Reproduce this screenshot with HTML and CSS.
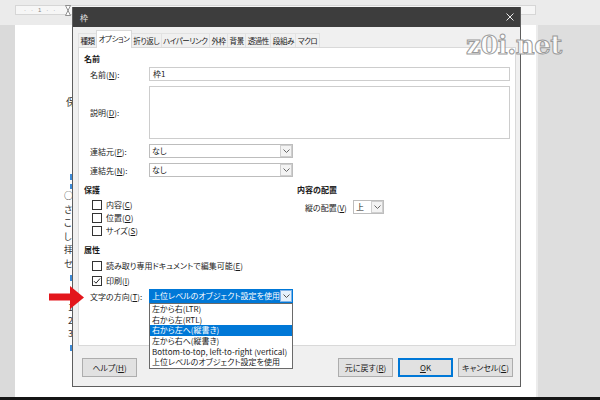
FILE: index.html
```html
<!DOCTYPE html>
<html lang="ja">
<head>
<meta charset="utf-8">
<title>枠</title>
<link rel="stylesheet" href="styles.css">
</head>
<body>
<div class="screen">
  <div class="topbar">
    <div class="ruler">
      <span class="ruler-marks">·&nbsp;&nbsp;&nbsp;·&nbsp;&nbsp;&nbsp;1&nbsp;&nbsp;&nbsp;·&nbsp;&nbsp;&nbsp;·</span>
      <svg class="hourglass" width="6" height="11" viewBox="0 0 6 11"><path d="M0.5 0.5H5.5L3 5.5L5.5 10.5H0.5L3 5.5Z" fill="#fff" stroke="#777" stroke-width="0.8"/></svg>
    </div>
  </div>
  <div class="workspace">
    <div class="gutter-left"></div>
    <div class="page">
      <div class="doc-line first">保</div>
      <span class="tick t1"></span>
      <span class="tick t2"></span>
      <div class="doc-block b1">
        <div>○</div><div>さ</div><div>こ</div><div>し</div><div>拝</div><div>セ</div>
      </div>
      <span class="tick t3"></span>
      <div class="doc-block b2">
        <div>1</div><div>2</div><div>3</div>
      </div>
      <span class="tick t4"></span>
    </div>
    <div class="gutter-right"></div>
  </div>
  <div class="bottom-edge"></div>

  <div class="dialog">
    <div class="titlebar">
      <span class="title">枠</span>
      <svg class="close" width="8" height="8" viewBox="0 0 8 8"><path d="M0.5 0.5L7.5 7.5M7.5 0.5L0.5 7.5" stroke="#e8e8e8" stroke-width="1"/></svg>
    </div>
    <div class="dlg-body">
      <div class="tabs">
        <div class="tab">種類</div>
        <div class="tab active">オプション</div>
        <div class="tab">折り返し</div>
        <div class="tab">ハイパーリンク</div>
        <div class="tab">外枠</div>
        <div class="tab">背景</div>
        <div class="tab">透過性</div>
        <div class="tab">段組み</div>
        <div class="tab">マクロ</div>
      </div>
      <div class="panel">
        <div class="heading">名前</div>
        <div class="form">
          <span class="lbl">名前(<u>N</u>):</span>
          <div class="input">枠1</div>
          <span class="lbl">説明(<u>D</u>):</span>
          <div class="textarea"></div>
          <span class="lbl">連結元(<u>P</u>):</span>
          <div class="select wide"><span class="val">なし</span><span class="dd"><svg width="7" height="4" viewBox="0 0 7 4"><path d="M0.5 0.5L3.5 3.5L6.5 0.5" fill="none" stroke="#666"/></svg></span></div>
          <span class="lbl">連結先(<u>N</u>):</span>
          <div class="select wide"><span class="val">なし</span><span class="dd"><svg width="7" height="4" viewBox="0 0 7 4"><path d="M0.5 0.5L3.5 3.5L6.5 0.5" fill="none" stroke="#666"/></svg></span></div>
        </div>
        <div class="cols">
          <div class="col-left">
            <div class="heading">保護</div>
            <div class="checks">
              <div class="check"><span class="box"></span>内容(<u>C</u>)</div>
              <div class="check"><span class="box"></span>位置(<u>O</u>)</div>
              <div class="check"><span class="box"></span>サイズ(<u>S</u>)</div>
            </div>
            <div class="heading attr">属性</div>
            <div class="checks checks2">
              <div class="check"><span class="box"></span>読み取り専用ドキュメントで編集可能(<u>E</u>)</div>
              <div class="check"><span class="box"><svg width="8" height="8" viewBox="0 0 8 8"><path d="M1 4.2L3 6.2L7 1.5" fill="none" stroke="#222" stroke-width="1"/></svg></span>印刷(<u>I</u>)</div>
            </div>
            <div class="dir-row">
              <span class="lbl">文字の方向(<u>T</u>):</span>
              <div class="select wide focused">
                <span class="val">上位レベルのオブジェクト設定を使用</span>
                <span class="dd"><svg width="7" height="4" viewBox="0 0 7 4"><path d="M0.5 0.5L3.5 3.5L6.5 0.5" fill="none" stroke="#555"/></svg></span>
                <div class="droplist">
                  <div class="item">左から右(LTR)</div>
                  <div class="item">右から左(RTL)</div>
                  <div class="item sel">右から左へ(縦書き)</div>
                  <div class="item">左から右へ(縦書き)</div>
                  <div class="item">Bottom-to-top, left-to-right (vertical)</div>
                  <div class="item">上位レベルのオブジェクト設定を使用</div>
                </div>
              </div>
            </div>
          </div>
          <div class="col-right">
            <div class="heading">内容の配置</div>
            <div class="valign-row">
              <span class="lbl2">縦の配置(<u>V</u>)</span>
              <div class="select small"><span class="val">上</span><span class="dd"><svg width="7" height="4" viewBox="0 0 7 4"><path d="M0.5 0.5L3.5 3.5L6.5 0.5" fill="none" stroke="#666"/></svg></span></div>
            </div>
          </div>
        </div>
      </div>
      <div class="buttons">
        <div class="button">ヘルプ(<u>H</u>)</div>
        <div class="spacer"></div>
        <div class="btn-group">
          <div class="button">元に戻す(<u>R</u>)</div>
          <div class="button ok"><u>O</u>K</div>
          <div class="button">キャンセル(<u>C</u>)</div>
        </div>
      </div>
    </div>
  </div>

  <svg class="red-arrow" width="35" height="23" viewBox="0 0 35 23"><rect x="0" y="7.5" width="22" height="7" fill="#e3161c"/><polygon points="21,0 35,11.5 21,23" fill="#e3161c"/></svg>
  <div class="watermark">z0i.net</div>
</div>
</body>
</html>
```

FILE: styles.css
```css
* { box-sizing: border-box; }
html, body { margin: 0; padding: 0; }
body {
  width: 600px;
  height: 400px;
  overflow: hidden;
  font-family: "Noto Sans CJK JP", "Noto Sans", sans-serif;
  font-feature-settings: "palt" 1;
  color: #1a1a1a;
}
u { text-decoration: underline; text-underline-offset: 1px; }

.screen {
  position: relative;
  width: 600px;
  height: 400px;
  display: flex;
  flex-direction: column;
  background: #e2e2e2;
}

/* ---------- background application ---------- */
.topbar {
  height: 25px;
  display: flex;
  padding: 5px 64px 0 15px;
  background: #ebebeb;
}
.ruler {
  height: 10px;
  flex: 1;
  background: #f6f6f6;
  border: 1px solid #d6d6d6;
  display: flex;
  align-items: center;
  padding-left: 8px;
  position: relative;
}
.ruler-marks { font-size: 6px; line-height: 8px; color: #888; font-family: "Liberation Sans", sans-serif; }
.hourglass { margin-left: 10px; margin-top: 1px; }

.workspace { flex: 1; display: flex; }
.gutter-left { width: 15px; background: #dadada; }
.page { width: 521px; background: #fff; display: flex; flex-direction: column; align-items: flex-start; }
.gutter-right { flex: 1; background: #dedede; border-left: 2px solid #ececec; }
.bottom-edge { height: 3px; background: #161616; }

.doc-line.first { margin-top: 70px; height: 14px; line-height: 14px; padding-left: 51px; font-size: 10px; color: #333; }
.tick { display: block; width: 2px; height: 6px; margin-left: 55px; background: #3b8ad8; }
.t1 { margin-top: 65px; }
.t2 { margin-top: 4px; height: 5px; }
.t3 { margin-top: 4px; }
.t4 { margin-top: 5px; }
.doc-block { padding-left: 49px; font-size: 9px; color: #333; }
.b1 { line-height: 13.6px; }
.b2 { margin-top: 20px; line-height: 13px; padding-left: 53px; font-size: 9px; }

/* ---------- dialog ---------- */
.dialog {
  position: absolute;
  left: 72px;
  top: 7px;
  width: 449px;
  height: 380px;
  border: 1px solid #5e5e5e;
  border-top: 0;
  background: #f0f0f0;
  display: flex;
  flex-direction: column;
}
.titlebar {
  height: 20px;
  background: #3d3d3d;
  display: flex;
  align-items: center;
  justify-content: space-between;
  padding: 0 6px 0 7px;
  color: #e6e6e6;
  font-size: 8px;
}
.dlg-body {
  flex: 1;
  display: flex;
  flex-direction: column;
  padding: 3px 4px 0 5px;
}

.tabs {
  height: 17px;
  display: flex;
  align-items: flex-end;
}
.tab {
  height: 14px;
  line-height: 13px;
  padding: 0 1.5px;
  font-size: 7.5px;
  letter-spacing: -0.45px;
  border: 1px solid #e2e2e2;
  border-bottom: 0;
  margin-right: -1px;
  white-space: nowrap;
  background: #f0f0f0;
}
.tab.active {
  position: relative;
  z-index: 1;
  height: 18px;
  line-height: 16px;
  margin-bottom: -1px;
  background: #fff;
  border-color: #d9d9d9;
}

.panel {
  height: 299px;
  background: #fff;
  border: 1px solid #d9d9d9;
  padding: 5px 5px 0 5px;
  font-size: 8px;
}
.heading {
  height: 12px;
  line-height: 12px;
  font-weight: bold;
  font-size: 8px;
}
.form {
  margin-top: 2px;
  display: grid;
  grid-template-columns: 65px 1fr;
  row-gap: 5px;
  align-items: center;
}
.lbl { padding-left: 6px; white-space: nowrap; }
.input {
  height: 14px;
  line-height: 12px;
  border: 1px solid #cdcdcd;
  padding-left: 3px;
}
.textarea {
  height: 53px;
  border: 1px solid #cdcdcd;
}
.select {
  position: relative;
  display: flex;
  height: 14px;
  border: 1px solid #bdbdbd;
  background: #fff;
}
.select.wide { width: 144px; }
.select.small { width: 31px; }
.select .val {
  flex: 1;
  line-height: 12px;
  padding-left: 2px;
  white-space: nowrap;
  overflow: hidden;
}
.select .dd {
  width: 12px;
  border: 1px solid #cfcfcf;
  background: #f3f3f3;
  display: flex;
  align-items: center;
  justify-content: center;
}
.select.focused { border-color: #0078d7; }
.select.focused .val { background: #0078d7; color: #fff; }
.select.focused .dd { background: #e5f1fb; border-color: #7eb4ea; }

.droplist {
  position: absolute;
  left: -1px;
  top: 13px;
  width: 144px;
  background: #fff;
  border: 1px solid #6a6a6a;
  z-index: 5;
}
.item {
  height: 10.7px;
  line-height: 10.7px;
  padding-left: 2px;
  white-space: nowrap;
  font-size: 8px;
}
.item.sel { background: #0078d7; color: #fff; }

.cols {
  margin-top: 7px;
  display: grid;
  grid-template-columns: 213px 1fr;
}
.checks { margin-top: 2px; padding-left: 8px; }
.checks2 { margin-top: 3px; display: flex; flex-direction: column; gap: 2px; }
.check {
  height: 13px;
  display: flex;
  align-items: center;
  white-space: nowrap;
}
.box {
  width: 10px;
  height: 10px;
  border: 1px solid #333;
  background: #fff;
  margin-right: 4px;
  display: flex;
  align-items: center;
  justify-content: center;
}
.heading.attr { margin-top: 7px; }
.dir-row {
  margin-top: 2px;
  display: grid;
  grid-template-columns: 65px 144px;
  align-items: center;
}
.valign-row {
  margin-top: 4px;
  display: flex;
  align-items: center;
}
.lbl2 { width: 56px; padding-left: 8px; white-space: nowrap; }

.buttons {
  display: flex;
  padding: 12px 3px 0 4px;
  font-size: 8px;
}
.spacer { flex: 1; }
.btn-group { display: flex; gap: 5px; }
.button {
  width: 55px;
  height: 19px;
  border: 1px solid #adadad;
  background: #e1e1e1;
  display: flex;
  align-items: center;
  justify-content: center;
  white-space: nowrap;
}
.button.ok {
  border-color: #0078d7;
  box-shadow: inset 0 0 0 1px #0078d7;
}

/* ---------- overlays ---------- */
.red-arrow { position: absolute; left: 49px; top: 286px; }
.watermark {
  position: absolute;
  left: 466px;
  top: 30px;
  font-family: "DejaVu Serif", serif;
  font-weight: bold;
  font-size: 26px;
  letter-spacing: -0.5px;
  color: rgba(255, 255, 255, 0.85);
  -webkit-text-stroke: 1px #9a9a9a;
}
```
